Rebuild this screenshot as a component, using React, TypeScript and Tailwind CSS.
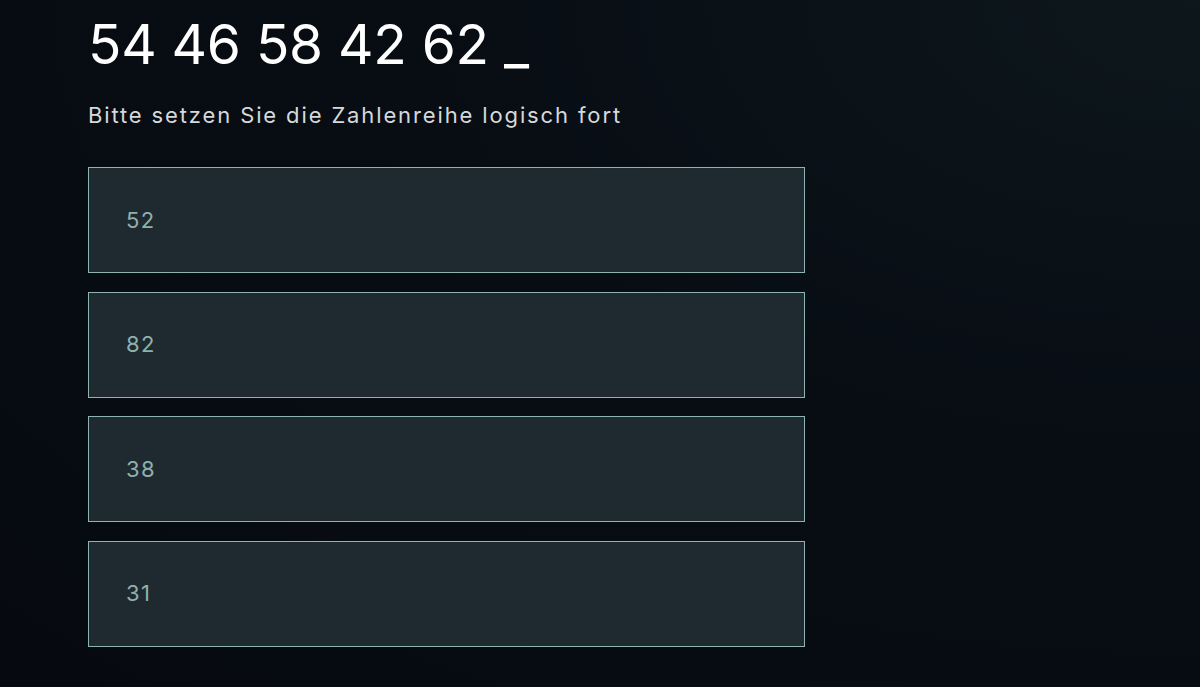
export default function App() {
  const options = ["52", "82", "38", "31"];

  return (
    <div className="min-h-[687px] w-full bg-[radial-gradient(ellipse_at_100%_0%,#0d171c_0%,#080d14_45%,#060a10_100%)] px-[88px] pt-[12px] font-['Inter','Noto_Sans',sans-serif] text-white">
      <h1 className="text-[55px] font-normal leading-[64px] tracking-[-0.005em] text-white">
        54 46 58 42 62 _
      </h1>
      <p className="mt-[24px] text-[22px] leading-[30px] tracking-[0.085em] text-[#d6d9dc]">
        Bitte setzen Sie die Zahlenreihe logisch fort
      </p>

      <div className="mt-[37px] flex w-[717px] flex-col gap-[18.5px]">
        {options.map((n) => (
          <button
            key={n}
            className="flex h-[106px] items-center border border-[#8fb3b3] bg-[#1f2a30] pl-[37px] text-left text-[22px] tracking-[0.06em] text-[#8fb0ac]"
          >
            {n}
          </button>
        ))}
      </div>
    </div>
  );
}
